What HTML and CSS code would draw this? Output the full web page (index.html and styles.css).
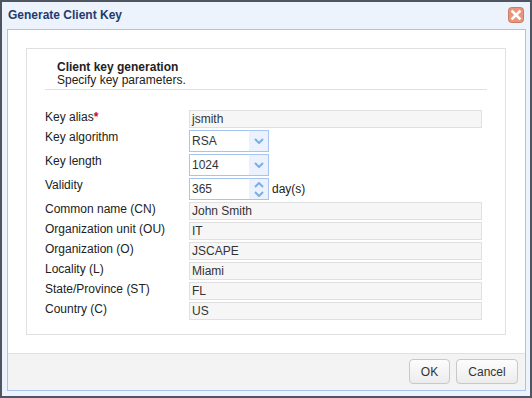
FILE: index.html
```html
<!DOCTYPE html>
<html>
<head>
<meta charset="utf-8">
<link rel="stylesheet" href="styles.css">
</head>
<body>
<div class="dialog">
  <div class="titlebar">
    <span class="title">Generate Client Key</span>
    <span class="close">
      <svg width="16" height="16" viewBox="0 0 16 16">
        <rect x="0.5" y="0.5" width="15" height="15" rx="3" fill="#e9957b" stroke="#c97d64"/>
        <path d="M4.5 4.5 L11.5 11.5 M11.5 4.5 L4.5 11.5" stroke="#fff" stroke-width="2.6" stroke-linecap="square"/>
      </svg>
    </span>
  </div>
  <div class="panel">
    <div class="content">
      <div class="fieldset">
        <div class="header">
          <div class="h-title">Client key generation</div>
          <div class="h-sub">Specify key parameters.</div>
        </div>
        <div class="form">
          <label class="lbl">Key alias<span class="req">*</span></label>
          <div class="field"><div class="input">jsmith</div></div>

          <label class="lbl">Key algorithm</label>
          <div class="field">
            <div class="select"><span class="val">RSA</span><span class="arrow"><svg width="10" height="6" viewBox="0 0 10 6"><path d="M1 1 L5 5 L9 1" fill="none" stroke="#79afe7" stroke-width="2"/></svg></span></div>
          </div>

          <label class="lbl">Key length</label>
          <div class="field">
            <div class="select"><span class="val">1024</span><span class="arrow"><svg width="10" height="6" viewBox="0 0 10 6"><path d="M1 1 L5 5 L9 1" fill="none" stroke="#79afe7" stroke-width="2"/></svg></span></div>
          </div>

          <label class="lbl">Validity</label>
          <div class="field">
            <div class="select"><span class="val">365</span><span class="arrow spin"><svg width="10" height="6" viewBox="0 0 10 6"><path d="M1 5 L5 1 L9 5" fill="none" stroke="#79afe7" stroke-width="2"/></svg><svg width="10" height="6" viewBox="0 0 10 6"><path d="M1 1 L5 5 L9 1" fill="none" stroke="#79afe7" stroke-width="2"/></svg></span></div>
            <span class="unit">day(s)</span>
          </div>

          <label class="lbl">Common name (CN)</label>
          <div class="field"><div class="input">John Smith</div></div>

          <label class="lbl">Organization unit (OU)</label>
          <div class="field"><div class="input">IT</div></div>

          <label class="lbl">Organization (O)</label>
          <div class="field"><div class="input">JSCAPE</div></div>

          <label class="lbl">Locality (L)</label>
          <div class="field"><div class="input">Miami</div></div>

          <label class="lbl">State/Province (ST)</label>
          <div class="field"><div class="input">FL</div></div>

          <label class="lbl">Country (C)</label>
          <div class="field"><div class="input">US</div></div>
        </div>
      </div>
    </div>
    <div class="footer">
      <button class="btn btn-ok">OK</button>
      <button class="btn btn-cancel">Cancel</button>
    </div>
  </div>
</div>
</body>
</html>
```

FILE: styles.css
```css
html, body {
  margin: 0;
  padding: 0;
}
body {
  width: 532px;
  height: 398px;
  font-family: "Liberation Sans", Arial, sans-serif;
  font-size: 12px;
  color: #222;
}
.dialog {
  box-sizing: border-box;
  width: 532px;
  height: 398px;
  border: 2px solid #4e5460;
  background: #edf3fd;
  display: flex;
  flex-direction: column;
}
.titlebar {
  height: 27px;
  display: flex;
  justify-content: space-between;
  align-items: flex-start;
  padding: 0 6px 0 6px;
}
.title {
  margin-top: 6px;
  line-height: 14px;
  font-weight: bold;
  color: #1f3b6c;
}
.close {
  margin-top: 5px;
  width: 16px;
  height: 16px;
  display: block;
}
.close svg { display: block; }
.panel {
  margin: 0 4px 0 5px;
  height: 362px;
  box-sizing: border-box;
  border: 1px solid #a6c4ee;
  background: #fff;
  display: flex;
  flex-direction: column;
}
.content {
  height: 323px;
  padding: 18px 0 0 18px;
  box-sizing: border-box;
}
.fieldset {
  width: 480px;
  height: 287px;
  box-sizing: border-box;
  border: 1px solid #e0e0e0;
}
.header {
  margin: 0 18px;
  padding: 12px 0 2px 12px;
  border-bottom: 1px solid #e0e0e0;
  line-height: 13px;
  color: #222;
}
.h-title { font-weight: bold; }
.form {
  margin: 20px 0 0 18px;
  display: grid;
  grid-template-columns: 144px 293px;
  row-gap: 2px;
  align-items: start;
}
.lbl {
  line-height: 14px;
  color: #222;
}
.req {
  color: #d0021b;
  font-weight: bold;
}
.field {
  display: flex;
  align-items: center;
}
.input {
  box-sizing: border-box;
  width: 293px;
  height: 18px;
  border: 1px solid #e0e0e0;
  background: #f6f6f6;
  padding: 0 2px;
  line-height: 16px;
  color: #333;
}
.select {
  box-sizing: border-box;
  width: 80px;
  height: 22px;
  border: 1px solid #a6c4ee;
  background: #fff;
  display: flex;
}
.val {
  flex: 1;
  padding-left: 2px;
  line-height: 20px;
  color: #333;
}
.arrow {
  width: 19px;
  background: #ebf2fd;
  display: flex;
  align-items: center;
  justify-content: center;
}
.arrow svg { display: block; }
.arrow.spin {
  flex-direction: column;
  gap: 3px;
}
.unit {
  margin-left: 3px;
  color: #222;
}
.footer {
  flex: 1;
  border-top: 1px solid #e0e0e0;
  background: #f3f3f3;
  display: flex;
  justify-content: flex-end;
  align-items: flex-start;
  padding: 5px 7px 0 0;
  gap: 6px;
}
.btn {
  box-sizing: border-box;
  height: 25px;
  border: 1px solid #c8c8c8;
  border-radius: 4px;
  background: linear-gradient(#fdfdfd, #ececec);
  font-family: "Liberation Sans", Arial, sans-serif;
  font-size: 12px;
  color: #333;
  padding: 0;
}
.btn-ok { width: 41px; }
.btn-cancel { width: 62px; }
```
